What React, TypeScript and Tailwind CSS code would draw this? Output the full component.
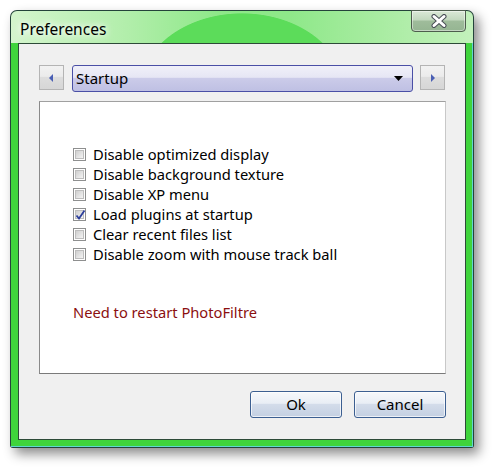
import React from 'react';

const FONT = { fontFamily: '"Noto Sans", "Open Sans", Arial, sans-serif' };

const options = [
    { label: 'Disable optimized display', checked: false },
    { label: 'Disable background texture', checked: false },
    { label: 'Disable XP menu', checked: false },
    { label: 'Load plugins at startup', checked: true },
    { label: 'Clear recent files list', checked: false },
    { label: 'Disable zoom with mouse track ball', checked: false },
];

function Checkbox({ checked }: { checked: boolean }) {
    return (
        <div className="w-[13px] h-[13px] border border-[#8e8f8f] bg-white p-[1px] shrink-0">
            <div className="relative w-full h-full bg-gradient-to-br from-[#cfcfcf] to-[#f4f4f4] border border-[#bdbdbd]">
                {checked && (
                    <svg className="absolute -left-[1px] -top-[2px]" width="11" height="12" viewBox="0 0 11 12">
                        <path d="M1.5 6.5 L4 9.5 L9.5 1.5" fill="none" stroke="#2c3f9c" strokeWidth="1.8" />
                    </svg>
                )}
            </div>
        </div>
    );
}

function ArrowButton({ dir }: { dir: 'left' | 'right' }) {
    return (
        <div className="w-[25px] h-[25px] border border-[#b4b4b4] bg-[linear-gradient(#f2f2f2_0%,#ebebeb_45%,#dddddd_50%,#d6d6d6_100%)] flex items-center justify-center">
            <svg width="5" height="8" viewBox="0 0 5 8">
                {dir === 'left'
                    ? <path d="M4 0 L0 4 L4 8 Z" fill="#4a5fb4" />
                    : <path d="M1 0 L5 4 L1 8 Z" fill="#4a5fb4" />}
            </svg>
        </div>
    );
}

function DialogButton({ label }: { label: string }) {
    return (
        <button className="w-[92px] h-[27px] rounded-[3px] border border-[#3c5f91] bg-[linear-gradient(#f6f8fb_0%,#e9eef5_45%,#d3dcea_50%,#c4d0e2_100%)] shadow-[inset_0_0_0_1px_rgba(255,255,255,0.7)] text-[15px] text-black leading-none">
            {label}
        </button>
    );
}

export default function App() {
    return (
        <div className="w-[493px] h-[468px] bg-white pl-[10px] pt-[10px] overflow-hidden" style={FONT}>
            {/* Window frame */}
            <div className="relative w-[464px] h-[438px] rounded-t-[7px] rounded-b-[3px] bg-[#24433a] p-px shadow-[5px_6px_12px_rgba(0,0,0,0.45)] flex flex-col overflow-hidden">
                {/* Title bar */}
                <div className="relative h-[32px] shrink-0 rounded-t-[6px] bg-[radial-gradient(ellipse_103px_78px_at_231px_80px,#5cdc5a_99%,transparent_100%),linear-gradient(90deg,#d4f5cd_0%,#b2eeab_25%,#8ee889_45%,#8ee889_60%,#a9eca2_80%,#c3f1bc_100%)] flex items-start pl-[9px] pt-[8px]">
                    <span className="text-[15.5px] leading-[20px] text-black [text-shadow:0_0_6px_#ffffff,0_0_10px_#ffffff]">Preferences</span>
                </div>

                {/* Close button */}
                <div className="absolute left-[401px] top-0 w-[55px] h-[22px] rounded-b-[4px] border border-[#4d5d4d] bg-[linear-gradient(#dbe9d7_0%,#c2d8be_45%,#9fbc9b_50%,#95b592_100%)] shadow-[inset_0_0_0_1px_rgba(255,255,255,0.45)] flex items-center justify-center">
                    <svg width="18" height="14" viewBox="0 0 18 14">
                        <path d="M4 2.5 L14 11.5 M14 2.5 L4 11.5" stroke="#4a4f57" strokeWidth="5" strokeLinecap="round" />
                        <path d="M4 2.5 L14 11.5 M14 2.5 L4 11.5" stroke="#ffffff" strokeWidth="3" strokeLinecap="round" />
                    </svg>
                </div>

                {/* Frame body with client area */}
                <div className="flex-1 flex px-[7px] pb-[6px] bg-[#3fd43c] border-r border-b border-[#5fd8d0]">
                    <div className="flex-1 border border-[#2d4a38] bg-[#f0f0f0] pt-[21px] pl-[20px] pr-[19px]">
                        <div className="flex items-start">
                            <ArrowButton dir="left" />
                            <div className="ml-[8px] w-[341px] h-[27px] rounded-[3px] border border-[#4a4fa6] bg-[linear-gradient(#f0f0f9_0%,#e6e6f4_45%,#cbcbe9_50%,#bfc0e3_100%)] flex items-center justify-between pl-[3px] pr-[9px]">
                                <span className="text-[15px] leading-none text-black">Startup</span>
                                <svg width="9" height="5" viewBox="0 0 9 5">
                                    <path d="M0 0 L9 0 L4.5 5 Z" fill="#000000" />
                                </svg>
                            </div>
                            <div className="ml-[7px]">
                                <ArrowButton dir="right" />
                            </div>
                        </div>

                        {/* Options panel */}
                        <div className="mt-[9px] w-[407px] h-[273px] bg-white border border-t-[#a0a0a0] border-l-[#8a8a8a] border-b-[#7a7a7a] border-r-[#c8c8c8] pt-[42px] pl-[33px]">
                            <div className="flex flex-col">
                                {options.map(opt => (
                                    <div key={opt.label} className="flex items-center gap-[7px] h-[20px]">
                                        <Checkbox checked={opt.checked} />
                                        <span className="text-[14.7px] leading-[20px] text-black whitespace-nowrap">{opt.label}</span>
                                    </div>
                                ))}
                            </div>
                            <div className="mt-[38px] text-[14.7px] leading-[20px] text-[#8b0f0f]">Need to restart PhotoFiltre</div>
                        </div>

                        {/* Buttons */}
                        <div className="mt-[17px] w-[407px] flex justify-end gap-[12px]">
                            <DialogButton label="Ok" />
                            <DialogButton label="Cancel" />
                        </div>
                    </div>
                </div>
            </div>
        </div>
    );
}
